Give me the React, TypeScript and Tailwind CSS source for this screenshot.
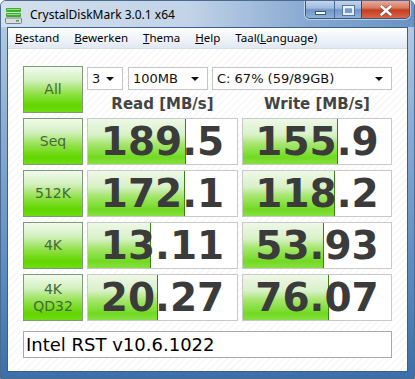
import React from "react";

const rows = [
  { label: ["Seq"], read: "189.5", rbar: 98, write: "155.9", wbar: 95 },
  { label: ["512K"], read: "172.1", rbar: 97, write: "118.2", wbar: 92 },
  { label: ["4K"], read: "13.11", rbar: 63, write: "53.93", wbar: 81 },
  { label: ["4K", "QD32"], read: "20.27", rbar: 70, write: "76.07", wbar: 86 },
];

function GreenButton({ lines }: { lines: string[] }) {
  return (
    <div className="h-[47px] border border-[#7f9c76] bg-[linear-gradient(to_bottom,#f1faec_0%,#d2f0bd_30%,#8fe044_60%,#62d600_85%,#6fdc12_100%)] flex flex-col items-center justify-center text-[14px] leading-[17px] text-[#44693a] font-['DejaVu_Sans',sans-serif]">
      {lines.map((l) => (
        <span key={l}>{l}</span>
      ))}
    </div>
  );
}

function ResultBox({ value, bar }: { value: string; bar: number }) {
  return (
    <div className="relative h-[47px] border border-[#c9c9c9] bg-white flex items-center justify-center overflow-hidden">
      <div
        className="absolute left-0 top-0 bottom-0 border-r border-[#3f7f1c] bg-[linear-gradient(to_bottom,#eef8e7_0%,#d9f1c8_35%,#a7e670_55%,#72da22_85%,#86e040_100%)]"
        style={{ width: bar }}
      />
      <span className="relative text-[39px] leading-none font-bold text-[#3b3b3b] font-['DejaVu_Sans',sans-serif]">
        {value}
      </span>
    </div>
  );
}

function Select({ text, className }: { text: string; className: string }) {
  return (
    <div
      className={`h-[23px] border border-[#c3c5c9] bg-white flex items-center pl-[4px] pr-[8px] text-[13px] text-[#111] font-['DejaVu_Sans',sans-serif] ${className}`}
    >
      <span className="flex-1">{text}</span>
      <svg width="8" height="4" viewBox="0 0 8 4">
        <path d="M0 0h8L4 4z" fill="#111" />
      </svg>
    </div>
  );
}

function AppIcon() {
  return (
    <svg width="18" height="17" viewBox="0 0 18 17">
      <rect x="1" y="1" width="15" height="4" rx="1" fill="#3fae2c" />
      <rect x="2" y="2" width="13" height="1" fill="#8fe07a" />
      <rect x="1" y="6" width="15" height="4" rx="1" fill="#3fae2c" />
      <rect x="2" y="7" width="13" height="1" fill="#8fe07a" />
      <rect x="0.5" y="11" width="16" height="5.5" rx="1" fill="#d9dde2" stroke="#7b828b" />
      <rect x="11" y="13" width="3" height="1.5" fill="#4e9a35" />
    </svg>
  );
}

export default function App() {
  return (
    <div className="w-[415px] h-[379px] flex flex-col overflow-hidden rounded-t-[6px] border border-[#4b6a8f] bg-[linear-gradient(to_bottom,#bcd0e6_0%,#8fb0d6_30%,#5e8dc3_70%,#3a70aa_100%)]">
      {/* title bar */}
      <div className="h-[26px] flex items-start bg-[linear-gradient(to_right,#d3dfec_0%,#c2d4e8_45%,#86a8d0_75%,#6a93c3_100%)]">
        <div className="mt-[6px] ml-[4px]">
          <AppIcon />
        </div>
        <span className="ml-[7px] mt-[6px] text-[12px] text-black font-['Noto_Sans',sans-serif] leading-[16px]">
          CrystalDiskMark 3.0.1 x64
        </span>
        <div className="ml-auto mr-[4px] flex h-[20px] -mt-[2px] rounded-b-[5px] border border-[#39587c] overflow-hidden shadow-[0_0_0_1px_rgba(255,255,255,0.5)]">
          <div className="w-[29px] flex items-center justify-center bg-[linear-gradient(to_bottom,#c9d9ec_0%,#9ebbe0_45%,#6f96c6_55%,#8fb2dc_100%)] border-r border-[#4a6a92]">
            <div className="w-[11px] h-[4px] mt-[7px] bg-white border border-[#3a5578]" />
          </div>
          <div className="w-[27px] flex items-center justify-center bg-[linear-gradient(to_bottom,#c9d9ec_0%,#9ebbe0_45%,#6f96c6_55%,#8fb2dc_100%)] border-r border-[#6b3a32]">
            <div className="w-[11px] h-[9px] mt-[2px] border-2 border-white/80 shadow-[0_0_0_1px_#5577a0]" />
          </div>
          <div className="w-[47px] flex items-center justify-center bg-[linear-gradient(to_bottom,#eab1a3_0%,#d9775f_45%,#c2401f_55%,#d8654a_100%)]">
            <svg width="12" height="11" viewBox="0 0 12 11" className="mt-[2px]">
              <path d="M1.5 1.5l9 8M10.5 1.5l-9 8" stroke="#3f1a12" strokeWidth="4" strokeLinecap="round" opacity="0.5" />
              <path d="M1.5 1.5l9 8M10.5 1.5l-9 8" stroke="#fff" strokeWidth="2.6" strokeLinecap="round" />
            </svg>
          </div>
        </div>
      </div>

      {/* window body */}
      <div className="flex-1 mx-[6px] mb-[6px] border border-[#3c5f8a] flex flex-col bg-white">
        {/* menu */}
        <div className="h-[21px] flex items-center gap-[15px] pl-[7px] border-b border-[#d5dde8] bg-[linear-gradient(to_bottom,#fdfeff_0%,#eef2f8_60%,#e1e8f1_100%)] text-[11.5px] text-black font-['Noto_Sans',sans-serif]">
          <span><span className="underline">B</span>estand</span>
          <span><span className="underline">B</span>ewerken</span>
          <span><span className="underline">T</span>hema</span>
          <span><span className="underline">H</span>elp</span>
          <span>Taal(<span className="underline">L</span>anguage)</span>
        </div>

        {/* client */}
        <div className="flex-1 pl-[15px] pt-[17px] bg-[repeating-linear-gradient(135deg,#ffffff_0px,#ffffff_3px,#f3f4f6_4px,#ffffff_5px)]">
          <div className="grid grid-cols-[60px_151px_150px] gap-x-[4px] gap-y-[5px] w-[369px]">
            <GreenButton lines={["All"]} />
            <div className="col-span-2 flex flex-col">
              <div className="flex gap-[5px] mt-[1px]">
                <Select text="3" className="w-[36px]" />
                <Select text="100MB" className="w-[80px]" />
                <Select text="C: 67% (59/89GB)" className="w-[180px] ml-[-1px]" />
              </div>
              <div className="flex mt-[5px] text-[15px] font-bold text-[#444] font-['DejaVu_Sans',sans-serif] leading-[18px]">
                <span className="w-[151px] text-center">Read [MB/s]</span>
                <span className="w-[150px] ml-[4px] text-center">Write [MB/s]</span>
              </div>
            </div>
            {rows.map((r) => (
              <React.Fragment key={r.read}>
                <GreenButton lines={r.label} />
                <ResultBox value={r.read} bar={r.rbar} />
                <ResultBox value={r.write} bar={r.wbar} />
              </React.Fragment>
            ))}
          </div>
          <div className="mt-[10px] w-[369px] h-[27px] border border-[#a9a9a9] bg-white flex items-center pl-[2px] text-[18px] text-black font-['DejaVu_Sans',sans-serif]">
            Intel RST v10.6.1022
          </div>
        </div>
      </div>
    </div>
  );
}
